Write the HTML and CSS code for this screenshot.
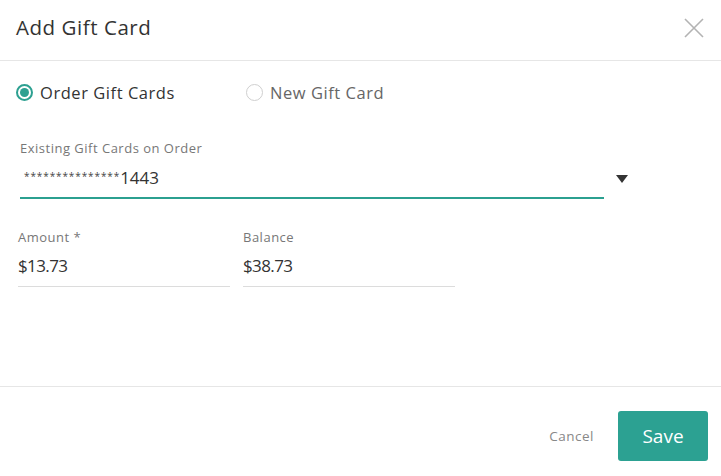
FILE: index.html
```html
<!DOCTYPE html>
<html>
<head>
<meta charset="utf-8">
<link rel="stylesheet" href="styles.css">
</head>
<body>
<div class="dialog">
  <header class="dlg-header">
    <h1 class="dlg-title">Add Gift Card</h1>
    <button class="close" aria-label="Close">
      <svg width="20" height="20" viewBox="0 0 20 20"><path d="M1 1 L19 19 M19 1 L1 19" stroke="#b3b3b3" stroke-width="1.6" fill="none"/></svg>
    </button>
  </header>
  <main class="dlg-body">
    <div class="radios">
      <label class="radio checked"><span class="dot"></span>Order Gift Cards</label>
      <label class="radio"><span class="dot"></span>New Gift Card</label>
    </div>
    <div class="select-field">
      <div class="field-label">Existing Gift Cards on Order</div>
      <div class="select-row">
        <div class="select-value"><span class="stars">***************</span>1443</div>
        <span class="caret"></span>
      </div>
    </div>
    <div class="pair">
      <div class="field">
        <div class="field-label">Amount *</div>
        <div class="field-value">$13.73</div>
      </div>
      <div class="field">
        <div class="field-label">Balance</div>
        <div class="field-value">$38.73</div>
      </div>
    </div>
  </main>
  <footer class="dlg-footer">
    <button class="cancel">Cancel</button>
    <button class="save">Save</button>
  </footer>
</div>
</body>
</html>
```
FILE: styles.css
```css
* { box-sizing: border-box; }
html, body { margin: 0; padding: 0; background: #fff; }
body { font-family: "Open Sans", "Lato", sans-serif; color: #333; }
.dialog { width: 721px; height: 476px; display: flex; flex-direction: column; }
.dlg-header {
  height: 61px; border-bottom: 1px solid #e6e6e6;
  display: flex; align-items: flex-start; justify-content: space-between;
  padding: 13px 17px 0 16px;
}
.dlg-title { margin: 0; font-size: 20.5px; font-weight: 400; color: #333; line-height: 28px; letter-spacing: 0.55px; }
.close { border: 0; background: none; padding: 0; margin-top: 5px; width: 20px; height: 20px; }
.close svg { display: block; }
.dlg-body { height: 326px; border-bottom: 1px solid #e6e6e6; padding: 20px 0 0 0; }
.radios { display: flex; padding-left: 16px; height: 22px; align-items: center; }
.radio { display: flex; align-items: center; font-size: 16.5px; color: #333; width: 230px; letter-spacing: 0.55px; }
.radio + .radio { color: #666; }
.dot {
  width: 17px; height: 17px; border-radius: 50%; border: 1px solid #cfcfcf;
  margin-right: 7px; position: relative; background: #fff; flex: none;
}
.radio.checked .dot { border: 2px solid #2da091; }
.radio.checked .dot::after {
  content: ""; position: absolute; left: 2px; top: 2px; width: 9px; height: 9px;
  border-radius: 50%; background: #2da091;
}
.select-field { margin: 37px 0 0 20px; }
.field-label { font-size: 13px; color: #777; line-height: 16px; letter-spacing: 0.5px; }
.select-row { display: flex; align-items: center; }
.select-value {
  width: 584px; border-bottom: 2px solid #2ba090; font-size: 17px; color: #333;
  padding: 9px 0 8px 4px; line-height: 22px;
}
.stars { font-size: 10px; letter-spacing: 0.9px; vertical-align: 4px; color: #444; }
.caret {
  width: 0; height: 0; margin-left: 12px; margin-top: 2px;
  border-left: 6px solid transparent; border-right: 6px solid transparent; border-top: 8px solid #333;
}
.pair { display: flex; gap: 13px; margin: 30px 0 0 18px; }
.field { width: 212px; border-bottom: 1px solid #dcdcdc; padding-bottom: 9px; }
.field-value { font-size: 17px; color: #333; margin-top: 10px; line-height: 22px; letter-spacing: -0.6px; }
.dlg-footer { flex: 1; display: flex; align-items: center; justify-content: flex-end; padding: 9px 13px 0 0; }
.cancel { border: 0; background: none; font-family: inherit; font-size: 13.5px; color: #888; margin-right: 24px; padding: 0; letter-spacing: 0.5px; }
.save {
  border: 0; background: #2ca192; color: #fff; font-family: inherit; font-size: 19px;
  width: 90px; height: 50px; border-radius: 3px;
}
```
